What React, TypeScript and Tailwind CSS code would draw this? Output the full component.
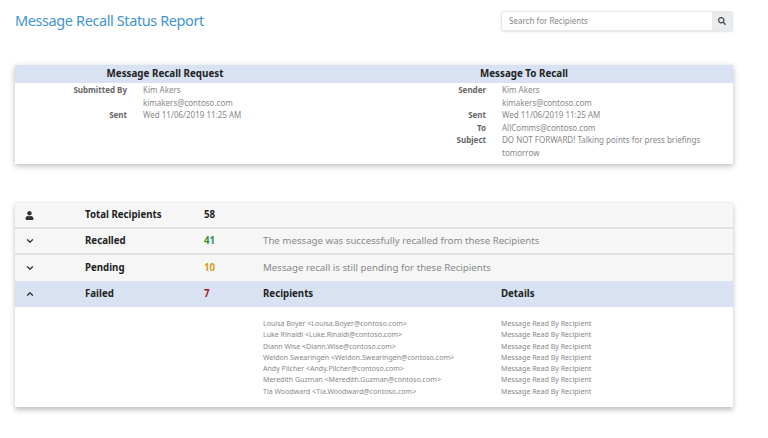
import { ChevronDown, ChevronUp } from 'lucide-react';
import { FaSearch, FaUser } from 'react-icons/fa';

const FAILED = [
  ['Louisa Boyer', 'Louisa.Boyer@contoso.com'],
  ['Luke Rinaldi', 'Luke.Rinaldi@contoso.com'],
  ['Diann Wise', 'Diann.Wise@contoso.com'],
  ['Weldon Swearingen', 'Weldon.Swearingen@contoso.com'],
  ['Andy Pilcher', 'Andy.Pilcher@contoso.com'],
  ['Meredith Guzman', 'Meredith.Guzman@contoso.com'],
  ['Tia Woodward', 'Tia.Woodward@contoso.com'],
];

function Field({ label, lines }: { label: string; lines: string[] }) {
  return (
    <div className="flex">
      <div className="w-[112px] shrink-0 text-right font-bold text-[#666]">{label}</div>
      <div className="ml-[16px] w-[205px]">
        {lines.map((l) => (
          <div key={l}>{l}</div>
        ))}
      </div>
    </div>
  );
}

function SummaryRow({
  icon,
  label,
  count,
  countClass,
  children,
}: {
  icon: React.ReactNode;
  label: string;
  count: number;
  countClass: string;
  children?: React.ReactNode;
}) {
  return (
    <div className="flex h-[26px] items-center border-b-2 border-[#e2e2e2] bg-[#f6f6f6] text-[9.7px] leading-[14px] last:border-b-0">
      <div className="flex w-[70px] justify-start pl-[10px] text-[#333]">{icon}</div>
      <div className="w-[119px] font-bold text-[#222]">{label}</div>
      <div className={`w-[59px] font-bold ${countClass}`}>{count}</div>
      <div className="text-[#888]">{children}</div>
    </div>
  );
}

export default function App() {
  return (
    <div className="h-[438px] w-[768px] overflow-hidden bg-white pl-[15px] font-['Noto_Sans',sans-serif] text-[#888]">
      <div className="flex h-[65px] w-[718px] items-start justify-between">
        <h1 className="mt-[10px] text-[14.5px] leading-[20px] tracking-[-0.4px] text-[#3f94d2]">Message Recall Status Report</h1>
        <div className="mt-[11px] flex h-[20px] w-[232px] rounded-[2px] border border-[#e8e8e8] shadow-[0_1px_2px_rgba(0,0,0,0.12)]">
          <div className="flex-1 pl-[7px] text-[8px] leading-[18px] text-[#888]">Search for Recipients</div>
          <div className="flex w-[20px] items-center justify-center bg-[#e9ecef] text-[#444]">
            <FaSearch size={8} />
          </div>
        </div>
      </div>

      <div className="h-[99px] w-[718px] bg-white shadow-[0_2px_6px_rgba(0,0,0,0.28)]">
        <div className="flex h-[18px] items-center bg-[#d9e2f3] text-[9.8px] font-bold text-[#222]">
          <div className="w-[300px] text-center">Message Recall Request</div>
          <div className="w-[418px] text-center">Message To Recall</div>
        </div>
        <div className="flex pt-[1px] text-[8px] leading-[12.5px]">
          <div className="w-[359px]">
            <Field label="Submitted By" lines={['Kim Akers', 'kimakers@contoso.com']} />
            <Field label="Sent" lines={['Wed 11/06/2019 11:25 AM']} />
          </div>
          <div className="w-[359px]">
            <Field label="Sender" lines={['Kim Akers', 'kimakers@contoso.com']} />
            <Field label="Sent" lines={['Wed 11/06/2019 11:25 AM']} />
            <Field label="To" lines={['AllComms@contoso.com']} />
            <Field label="Subject" lines={['DO NOT FORWARD! Talking points for press briefings tomorrow']} />
          </div>
        </div>
      </div>

      <div className="mt-[38px] w-[718px] bg-white shadow-[0_3px_5px_rgba(0,0,0,0.25)]">
        <div className="border-t border-[#ececec]">
          <SummaryRow icon={<FaUser size={9} />} label="Total Recipients" count={58} countClass="text-[#222]" />
          <SummaryRow
            icon={<ChevronDown size={10} strokeWidth={3} />}
            label="Recalled"
            count={41}
            countClass="text-[#3c8f3c]"
          >
            The message was successfully recalled from these Recipients
          </SummaryRow>
          <SummaryRow
            icon={<ChevronDown size={10} strokeWidth={3} />}
            label="Pending"
            count={10}
            countClass="text-[#d0a020]"
          >
            Message recall is still pending for these Recipients
          </SummaryRow>
        </div>
        <div className="flex h-[26px] items-center bg-[#d9e2f3] text-[9.7px] leading-[14px] font-bold text-[#222]">
          <div className="w-[70px] pl-[10px] text-[#333]">
            <ChevronUp size={10} strokeWidth={3} />
          </div>
          <div className="w-[119px]">Failed</div>
          <div className="w-[59px] text-[#a4161a]">7</div>
          <div className="w-[238px]">Recipients</div>
          <div>Details</div>
        </div>
        <div className="flex h-[100px] pl-[248px] pt-[11px] text-[7.05px] leading-[11.3px]">
          <div className="w-[238px]">
            {FAILED.map(([name, mail]) => (
              <div key={mail}>
                {name} &lt;{mail}&gt;
              </div>
            ))}
          </div>
          <div>
            {FAILED.map(([, mail]) => (
              <div key={mail}>Message Read By Recipient</div>
            ))}
          </div>
        </div>
      </div>
    </div>
  );
}
